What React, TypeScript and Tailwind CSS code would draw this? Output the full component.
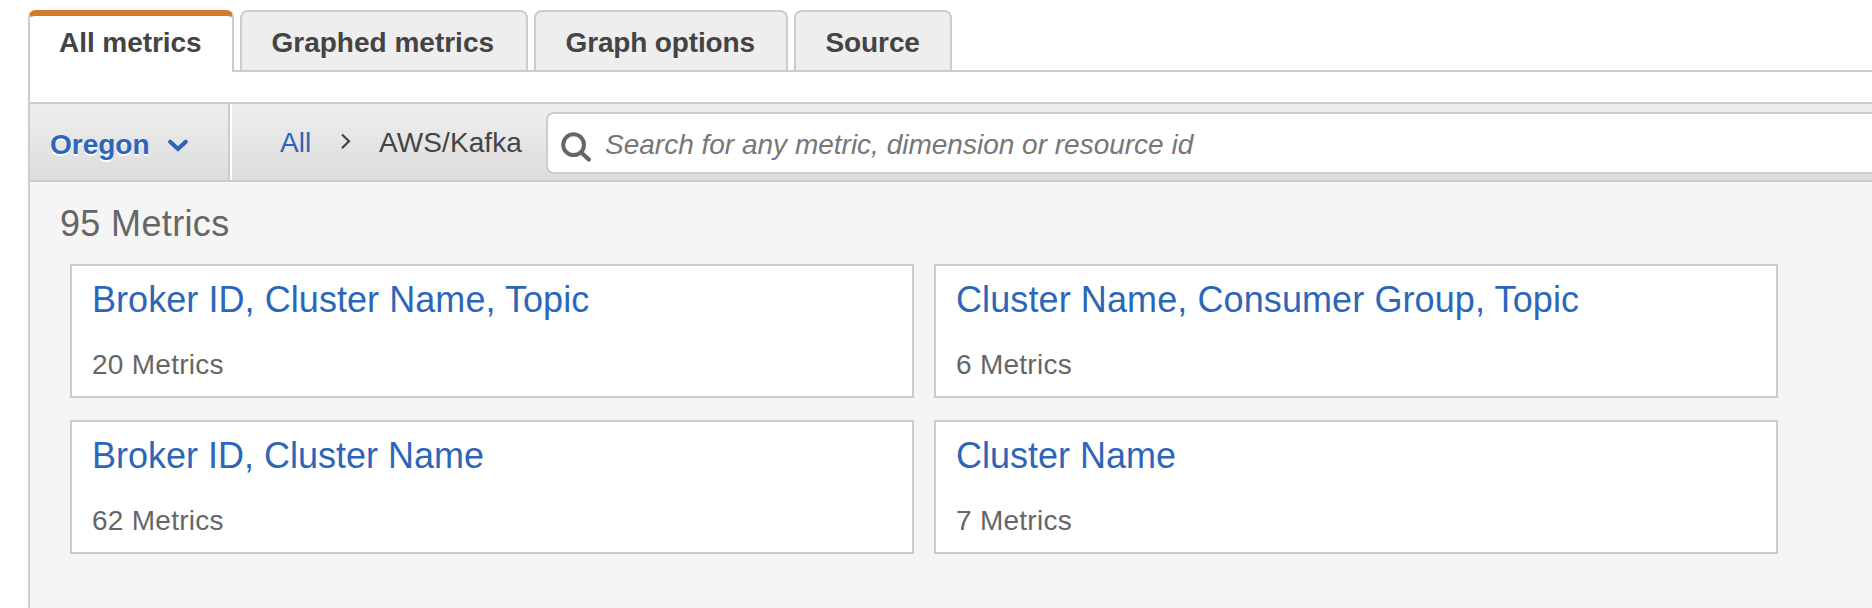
import React from "react";

const tabs = [
  { label: "Graphed metrics", width: "w-72", tracking: "tracking-normal" },
  { label: "Graph options", width: "w-[254px]", tracking: "tracking-[-0.15px]" },
  { label: "Source", width: "w-[158px]", tracking: "tracking-[-0.1px]" },
];

const groups = [
  { title: "Broker ID, Cluster Name, Topic", count: 20, tracking: "tracking-[0.06px]" },
  { title: "Cluster Name, Consumer Group, Topic", count: 6, tracking: "tracking-[0.1px]" },
  { title: "Broker ID, Cluster Name", count: 62, tracking: "tracking-normal" },
  { title: "Cluster Name", count: 7, tracking: "tracking-normal" },
];

function TabBar() {
  return (
    <nav className="flex h-[62px] gap-1.5 pl-7 text-[28px] leading-[31px] font-bold whitespace-nowrap text-[#444]">
      <div className="relative z-10 h-[62px] w-[206px] overflow-hidden rounded-t-lg border-x-2 border-t-[6px] border-x-[#ccc] border-t-[#d17a2a] bg-white pt-[11px] pl-[29px] tracking-[-0.05px]">
        All metrics
      </div>
      {tabs.map((t) => (
        <div
          key={t.label}
          className={`h-[60px] rounded-t-lg border-2 border-b-0 border-[#ccc] bg-[#eee] pt-[15px] pl-[29.5px] ${t.width} ${t.tracking}`}
        >
          {t.label}
        </div>
      ))}
    </nav>
  );
}

function Toolbar() {
  return (
    <div className="flex h-20 border-y-2 border-[#ccc] bg-linear-to-b from-[#eee] to-[#ddd] text-[28px] leading-[31px] whitespace-nowrap">
      <button className="flex w-[200px] items-start border-r-2 border-[#ccc] pt-[25px] pl-5 text-left font-bold text-[#2d66b8] [text-shadow:0_2px_0_#fff]">
        <span className="w-[98px]">Oregon</span>
        <svg className="mt-2 ml-[19px]" width="22" height="16" viewBox="0 0 22 16" fill="none">
          <path d="M3.2 4.8 L11 12 L18.8 4.8" stroke="currentColor" strokeWidth="4.2" strokeLinecap="round" />
        </svg>
      </button>
      <div className="flex w-[316px] items-start border-l-2 border-white pt-[23px] pl-12 text-[#444]">
        <a className="w-[60px] text-[#2d66b8]">All</a>
        <svg className="mt-[5px]" width="12" height="20" viewBox="0 0 12 20" fill="none">
          <path d="M2 2.5 L9 9.3 L2 16.1" stroke="#444" strokeWidth="2.2" />
        </svg>
        <span className="ml-[27px] tracking-[0.1px]">AWS/Kafka</span>
      </div>
      <div className="mt-2 flex h-[62px] flex-1 items-start rounded-l-lg border-2 border-r-0 border-[#ccc] bg-white pt-[15px] pl-[13px] text-[#777] italic">
        <svg className="mt-[3px]" width="30" height="30" viewBox="0 0 30 30" fill="none">
          <circle cx="12.6" cy="12.7" r="10.4" stroke="#666" strokeWidth="4" />
          <path d="M20 20.2 L27.8 27.6" stroke="#666" strokeWidth="4.2" strokeLinecap="round" />
        </svg>
        <span className="ml-3.5">Search for any metric, dimension or resource id</span>
      </div>
    </div>
  );
}

type MetricCardProps = { title: string; count: number; tracking: string };

function MetricCard({ title, count, tracking }: MetricCardProps) {
  return (
    <article className="h-[134px] border-2 border-[#ccc] bg-white pl-5">
      <h2 className={`pt-3 text-4xl leading-[43px] text-[#2d66b8] ${tracking}`}>{title}</h2>
      <p className="mt-7 text-[28px] leading-[31px] tracking-[0.26px] text-[#666]">{count} Metrics</p>
    </article>
  );
}

export default function App() {
  return (
    <div className="h-[608px] w-[1872px] overflow-hidden bg-white pt-2.5 font-['Liberation_Sans',Arial,sans-serif]">
      <TabBar />
      <main className="-mt-0.5 ml-7 h-[538px] border-t-2 border-l-2 border-[#ccc]">
        <div className="h-[30px]" />
        <Toolbar />
        <section className="h-[426px] bg-[#f5f5f5] pt-5">
          <h1 className="pl-[30px] text-4xl leading-[43px] tracking-[0.35px] text-[#666]">95 Metrics</h1>
          <div className="mt-[19px] ml-10 grid grid-cols-[844px_844px] gap-x-5 gap-y-[22px]">
            {groups.map((g) => (
              <MetricCard key={g.title} {...g} />
            ))}
          </div>
        </section>
      </main>
    </div>
  );
}
